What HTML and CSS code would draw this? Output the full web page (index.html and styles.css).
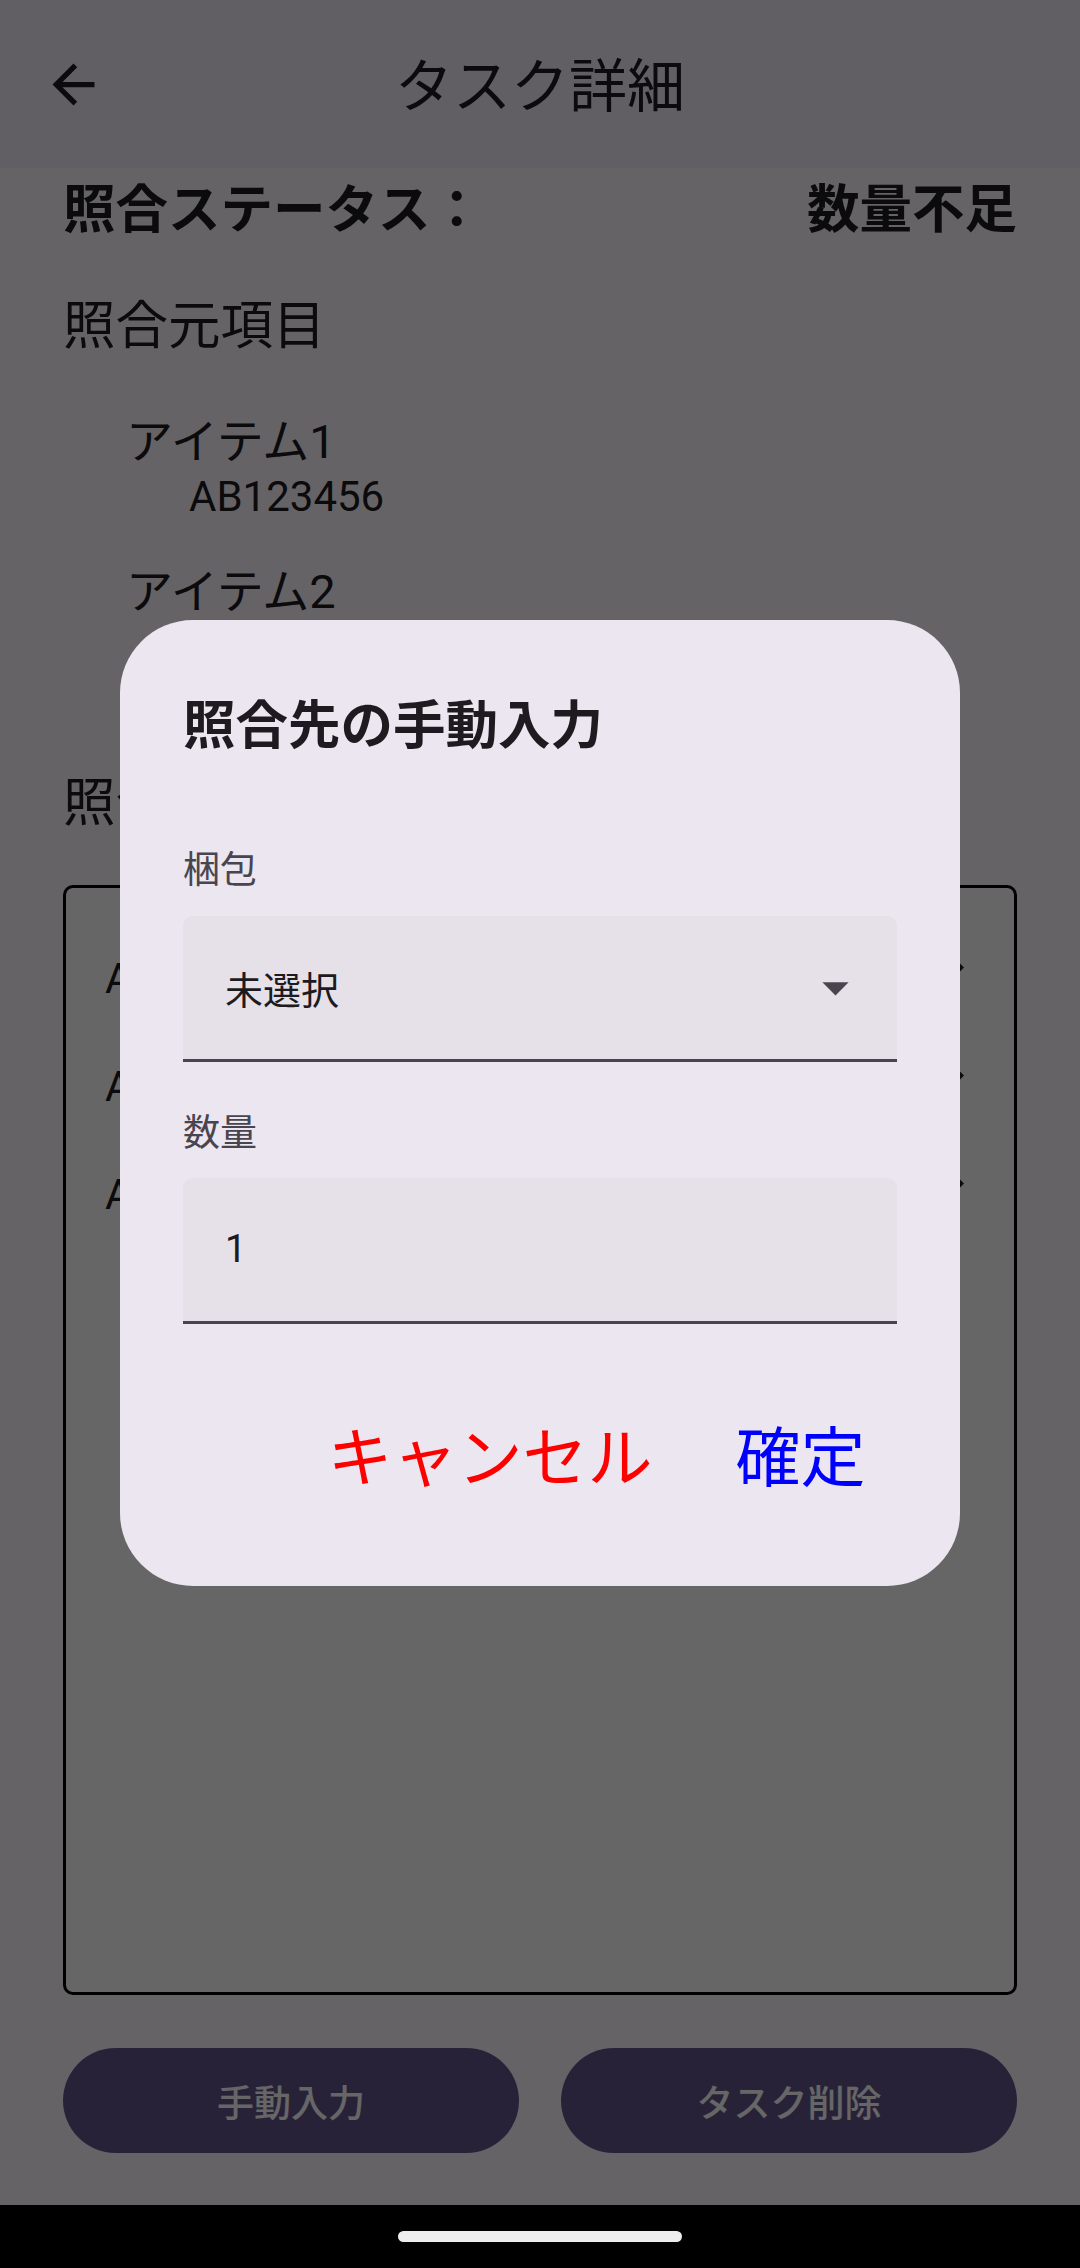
FILE: index.html
```html
<!DOCTYPE html>
<html lang="ja">
<head>
  <meta charset="UTF-8">
  <title>タスク詳細</title>
  <link rel="stylesheet" href="styles.css">
</head>
<body>
  <div class="screen">
    <header class="app-bar">
      <button class="nav-btn" aria-label="戻る">
        <svg viewBox="0 0 24 24" width="63" height="63"><path d="M20 11H7.830l5.590-5.590L12 4l-8 8 8 8 1.410-1.410L7.830 13H20v-2z"/></svg>
      </button>
      <h1 class="app-title">タスク詳細</h1>
      <span></span>
    </header>

    <main class="content">
      <div class="status-row">
        <span>照合ステータス：</span>
        <span>数量不足</span>
      </div>

      <h2 class="section-title">照合元項目</h2>
      <ul class="source-list">
        <li>
          <div class="item-name">アイテム1</div>
          <div class="item-code">AB123456</div>
        </li>
        <li>
          <div class="item-name">アイテム2</div>
        </li>
      </ul>

      <h2 class="section-title second">照合先項目</h2>
      <div class="target-box">
        <div class="target-row">
          <span>AB123456</span>
          <svg viewBox="0 0 24 24" width="63" height="63"><path d="M8.59 16.59L13.17 12 8.59 7.41 10 6l6 6-6 6-1.41-1.41z"/></svg>
        </div>
        <div class="target-row">
          <span>AB123456</span>
          <svg viewBox="0 0 24 24" width="63" height="63"><path d="M8.59 16.59L13.17 12 8.59 7.41 10 6l6 6-6 6-1.41-1.41z"/></svg>
        </div>
        <div class="target-row">
          <span>AB123457</span>
          <svg viewBox="0 0 24 24" width="63" height="63"><path d="M8.59 16.59L13.17 12 8.59 7.41 10 6l6 6-6 6-1.41-1.41z"/></svg>
        </div>
      </div>

      <div class="actions">
        <button class="pill">手動入力</button>
        <button class="pill">タスク削除</button>
      </div>
    </main>
  </div>

  <div class="scrim">
    <div class="dialog">
      <h3 class="dialog-title">照合先の手動入力</h3>

      <div class="field-label">梱包</div>
      <div class="field">
        <span>未選択</span>
        <svg class="drop" viewBox="0 0 24 24" width="63" height="63"><path d="M7 10l5 5 5-5z"/></svg>
      </div>

      <div class="field-label qty">数量</div>
      <div class="field">
        <span>1</span>
      </div>

      <div class="dialog-buttons">
        <button class="text-btn cancel">キャンセル</button>
        <button class="text-btn ok">確定</button>
      </div>
    </div>
  </div>

  <div class="nav-bar"><span class="handle"></span></div>
</body>
</html>
```

FILE: styles.css
```css
body {
  margin: 0;
  width: 1080px;
  height: 2268px;
  display: flex;
  flex-direction: column;
  background-color: #fef7ff;
  color: #1d1b20;
  font-family: Roboto, "Noto Sans CJK JP", sans-serif;
  overflow: hidden;
}

button {
  font-family: inherit;
  border: none;
  background: none;
  padding: 0;
  cursor: pointer;
}

.screen {
  flex: 1;
  display: flex;
  flex-direction: column;
  min-height: 0;
}

/* top app bar */
.app-bar {
  height: 168px;
  flex-shrink: 0;
  display: grid;
  grid-template-columns: 126px 1fr 126px;
  align-items: center;
  padding: 0 10.5px;
  background-color: #f3edf7;
}

.nav-btn {
  width: 126px;
  height: 126px;
  display: flex;
  align-items: center;
  justify-content: center;
}

.nav-btn svg {
  fill: #1d1b20;
}

.app-title {
  margin: 0;
  padding-top: 6px;
  text-align: center;
  font-size: 58px;
  font-weight: 400;
  line-height: 74px;
}

/* page body */
.content {
  flex: 1;
  display: flex;
  flex-direction: column;
  padding: 0 63px 52px;
  min-height: 0;
}

.status-row {
  display: flex;
  justify-content: space-between;
  margin-top: 11px;
  font-size: 52.5px;
  font-weight: 700;
  line-height: 63px;
}

.section-title {
  margin: 53px 0 0;
  font-size: 52.5px;
  font-weight: 400;
  line-height: 63px;
}

.section-title.second {
  margin-top: 152px;
}

.source-list {
  list-style: none;
  margin: 56px 0 0;
  padding: 0 0 0 63px;
}

.source-list li + li {
  margin-top: 40px;
}

.item-name {
  font-size: 47px;
  line-height: 56px;
}

.item-code {
  padding-left: 63px;
  font-size: 42px;
  line-height: 54px;
}

.target-box {
  flex: 1;
  margin-top: 50px;
  padding-top: 36px;
  border: 3px solid #000;
  border-radius: 10px;
  background-color: #fff;
}

.target-row {
  height: 108px;
  display: flex;
  align-items: center;
  justify-content: space-between;
  padding: 0 29px 0 39px;
  font-size: 42px;
}

.target-row svg {
  margin-bottom: 22px;
  fill: #1d1b20;
}

.actions {
  display: grid;
  grid-template-columns: 1fr 1fr;
  gap: 42px;
  margin-top: 53px;
}

.pill {
  height: 105px;
  border-radius: 52.5px;
  background-color: #65558f;
  color: #fff;
  font-size: 37px;
  font-weight: 500;
}

/* dialog */
.scrim {
  position: fixed;
  top: 0;
  left: 0;
  right: 0;
  bottom: 63px;
  display: flex;
  align-items: center;
  justify-content: center;
  background-color: rgba(0, 0, 0, 0.6);
}

.dialog {
  width: 840px;
  box-sizing: border-box;
  padding: 69px 63px 74px;
  border-radius: 73px;
  background-color: #ece6f0;
}

.dialog-title {
  margin: 0 0 83px;
  font-size: 52.5px;
  font-weight: 700;
  line-height: 74px;
}

.field-label {
  margin-bottom: 20px;
  color: #49454f;
  font-size: 37px;
  line-height: 50px;
}

.field-label.qty {
  margin-top: 47px;
  margin-bottom: 19px;
}

.field {
  height: 146px;
  box-sizing: border-box;
  display: flex;
  align-items: center;
  justify-content: space-between;
  padding: 0 30px 0 42px;
  border-bottom: 3px solid #49454f;
  border-radius: 10px 10px 0 0;
  background-color: #e6e0e9;
  font-size: 38px;
}

.field .drop {
  fill: #49454f;
}

.dialog-buttons {
  display: flex;
  justify-content: flex-end;
  gap: 20px;
  margin-top: 83px;
}

.text-btn {
  height: 105px;
  padding: 0 31.5px;
  font-size: 65px;
  line-height: 105px;
}

.text-btn.cancel {
  color: #ff0000;
}

.text-btn.ok {
  color: #0000ff;
}

/* system navigation bar */
.nav-bar {
  height: 63px;
  flex-shrink: 0;
  display: flex;
  align-items: center;
  justify-content: center;
  background-color: #000;
}

.handle {
  width: 284px;
  height: 11px;
  border-radius: 6px;
  background-color: #eeeeee;
}
```
